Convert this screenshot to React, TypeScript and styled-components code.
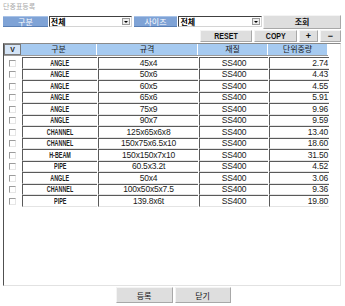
import React from "react";
import styled, { createGlobalStyle } from "styled-components";

const GlobalStyle = createGlobalStyle`
  html, body { margin: 0; padding: 0; background: #ffffff; }
  body { font-family: "Liberation Sans", "Noto Sans CJK KR", sans-serif; }
`;

const KR = `"Noto Sans CJK KR", "Liberation Sans", sans-serif`;
const LAT = `"Liberation Sans", "Noto Sans CJK KR", sans-serif`;

const Page = styled.div`
  width: 345px;
  height: 306px;
  box-sizing: border-box;
  padding: 1px 4px 0 3px;
  display: flex;
  flex-direction: column;
  overflow: hidden;
`;

const Title = styled.div`
  height: 12px;
  font-family: ${KR};
  font-size: 7px;
  line-height: 10px;
  color: #a8a8a8;
`;

const FilterRow = styled.div`
  display: flex;
  align-items: center;
  height: 15px;
  margin-top: 1px;
`;

const Label = styled.div<{ $w: number; $ml?: number }>`
  width: ${(p) => p.$w}px;
  margin-left: ${(p) => p.$ml || 0}px;
  height: 9px;
  background: #7fa3d6;
  border-top: 1px solid #a9c3e8;
  border-bottom: 1px solid #5a7fb4;
  color: #ffffff;
  font-family: ${KR};
  font-size: 8px;
  line-height: 9px;
  text-align: center;
  box-sizing: content-box;
`;

const Select = styled.div<{ $w: number }>`
  width: ${(p) => p.$w}px;
  margin-left: 1px;
  height: 11px;
  border-top: 1px solid #404040;
  border-left: 1px solid #404040;
  border-bottom: 1px solid #d4d4d4;
  border-right: 1px solid #d4d4d4;
  box-sizing: border-box;
  display: flex;
  align-items: center;
  justify-content: space-between;
  background: #fff;
  font-family: ${KR};
  font-weight: bold;
  font-size: 8px;
  line-height: 8px;
  color: #000;
  padding-left: 1px;
`;

const Arrow = styled.div`
  width: 8px;
  height: 7px;
  margin-right: 1px;
  background: #ececec;
  border: 1px solid #9a9a9a;
  box-sizing: border-box;
  display: flex;
  align-items: center;
  justify-content: center;
  &::after {
    content: "";
    border-left: 2px solid transparent;
    border-right: 2px solid transparent;
    border-top: 2px solid #000;
  }
`;

const Button = styled.button<{ $w: number; $h: number }>`
  width: ${(p) => p.$w}px;
  height: ${(p) => p.$h}px;
  padding: 0;
  margin: 0;
  background: #dedede;
  border: 1px solid;
  border-color: #f4f4f4 #a8a8a8 #a8a8a8 #f4f4f4;
  box-sizing: border-box;
  font-family: ${LAT};
  font-weight: bold;
  font-size: 9px;
  color: #111;
  display: flex;
  align-items: center;
  justify-content: center;
`;

const Squeeze = styled.span`
  display: inline-block;
  transform: scaleX(0.78);
`;

const KrButton = styled(Button)`
  font-family: ${KR};
  font-weight: normal;
  font-size: 8px;
`;

const SearchButton = styled(KrButton)`
  margin-left: 1px;
  font-weight: bold;
`;

const ActionRow = styled.div`
  display: flex;
  justify-content: flex-end;
  gap: 2px;
  height: 12px;
  margin-top: 1px;
`;

const TableBox = styled.div`
  margin-top: 1px;
  height: 243px;
  box-sizing: border-box;
  border-top: 1px solid #8a8a8a;
  border-left: 1px solid #505050;
  border-right: 1px solid #e2e2e2;
  border-bottom: 1px solid #e2e2e2;
  display: flex;
  flex-direction: column;
`;

const HeaderRow = styled.div`
  display: flex;
  height: 11px;
  width: 324px;
  background: #d8d8d8;
  border-bottom: 1px solid #9a9a9a;
`;

const HeadCell = styled.div<{ $w: number }>`
  width: ${(p) => p.$w}px;
  height: 11px;
  box-sizing: border-box;
  background: #a6caf0;
  border-right: 1px solid #ffffff;
  font-family: ${KR};
  font-size: 8px;
  line-height: 10px;
  color: #1a1a1a;
  text-align: center;
`;

const VCell = styled(HeadCell)`
  border: 1px solid #7a7a7a;
  font-family: ${LAT};
  font-weight: bold;
  font-size: 7px;
  line-height: 9px;
  background: #d4e4f6;
`;

const Body = styled.div`
  display: flex;
  flex-direction: column;
  padding-top: 1px;
`;

const Row = styled.div`
  display: flex;
  align-items: stretch;
  height: 12px;
  &:nth-child(even) {
    height: 11px;
  }
`;

const CheckCell = styled.div`
  width: 17px;
  display: flex;
  align-items: center;
  justify-content: center;
`;

const Check = styled.div`
  width: 7px;
  height: 7px;
  box-sizing: border-box;
  border: 1px solid;
  border-color: #9c9c9c #e6e6e6 #e6e6e6 #9c9c9c;
  background: #fff;
`;

const Cell = styled.div<{ $w: number; $right?: boolean }>`
  width: ${(p) => p.$w}px;
  margin-left: 1px;
  box-sizing: border-box;
  border-top: 1px solid #5a5a5a;
  border-left: 1px solid #5a5a5a;
  border-bottom: 1px solid #e4e4e4;
  background: #fff;
  font-family: ${LAT};
  font-size: 8.5px;
  line-height: 9px;
  letter-spacing: -0.2px;
  color: #1a1a1a;
  display: flex;
  align-items: center;
  justify-content: ${(p) => (p.$right ? "flex-end" : "center")};
  padding-right: ${(p) => (p.$right ? "1px" : "0")};
  white-space: nowrap;
  overflow: hidden;
`;

const Kind = styled.span`
  display: inline-block;
  font-size: 9px;
  font-weight: bold;
  letter-spacing: 0;
  color: #222;
  transform: scaleX(0.6);
`;

const Footer = styled.div`
  display: flex;
  justify-content: center;
  gap: 2px;
  margin-top: 1px;
  padding-left: 2px;
`;

const rows: [string, string, string, string][] = [
  ["ANGLE", "45x4", "SS400", "2.74"],
  ["ANGLE", "50x6", "SS400", "4.43"],
  ["ANGLE", "60x5", "SS400", "4.55"],
  ["ANGLE", "65x6", "SS400", "5.91"],
  ["ANGLE", "75x9", "SS400", "9.96"],
  ["ANGLE", "90x7", "SS400", "9.59"],
  ["CHANNEL", "125x65x6x8", "SS400", "13.40"],
  ["CHANNEL", "150x75x6.5x10", "SS400", "18.60"],
  ["H-BEAM", "150x150x7x10", "SS400", "31.50"],
  ["PIPE", "60.5x3.2t", "SS400", "4.52"],
  ["ANGLE", "50x4", "SS400", "3.06"],
  ["CHANNEL", "100x50x5x7.5", "SS400", "9.36"],
  ["PIPE", "139.8x6t", "SS400", "19.80"],
];

export default function App() {
  return (
    <>
      <GlobalStyle />
      <Page>
        <Title>단중표등록</Title>
        <FilterRow>
          <Label $w={45}>구분</Label>
          <Select $w={83}>
            <span>전체</span>
            <Arrow />
          </Select>
          <Label $w={44} $ml={2}>사이즈</Label>
          <Select $w={84}>
            <span>전체</span>
            <Arrow />
          </Select>
          <SearchButton $w={78} $h={14}>조회</SearchButton>
        </FilterRow>
        <ActionRow>
          <Button $w={52} $h={12}><Squeeze>RESET</Squeeze></Button>
          <Button $w={43} $h={12}><Squeeze>COPY</Squeeze></Button>
          <Button $w={19} $h={12}>+</Button>
          <Button $w={21} $h={12}>−</Button>
        </ActionRow>
        <TableBox>
          <HeaderRow>
            <VCell $w={17}>V</VCell>
            <HeadCell $w={76}>구분</HeadCell>
            <HeadCell $w={101}>규격</HeadCell>
            <HeadCell $w={70}>재질</HeadCell>
            <HeadCell $w={60}>단위중량</HeadCell>
          </HeaderRow>
          <Body>
            {rows.map((r, i) => (
              <Row key={i}>
                <CheckCell>
                  <Check />
                </CheckCell>
                <Cell $w={75}><Kind>{r[0]}</Kind></Cell>
                <Cell $w={100}>{r[1]}</Cell>
                <Cell $w={69}>{r[2]}</Cell>
                <Cell $w={60} $right>{r[3]}</Cell>
              </Row>
            ))}
          </Body>
        </TableBox>
        <Footer>
          <KrButton $w={57} $h={16}>등록</KrButton>
          <KrButton $w={56} $h={16}>닫기</KrButton>
        </Footer>
      </Page>
    </>
  );
}
